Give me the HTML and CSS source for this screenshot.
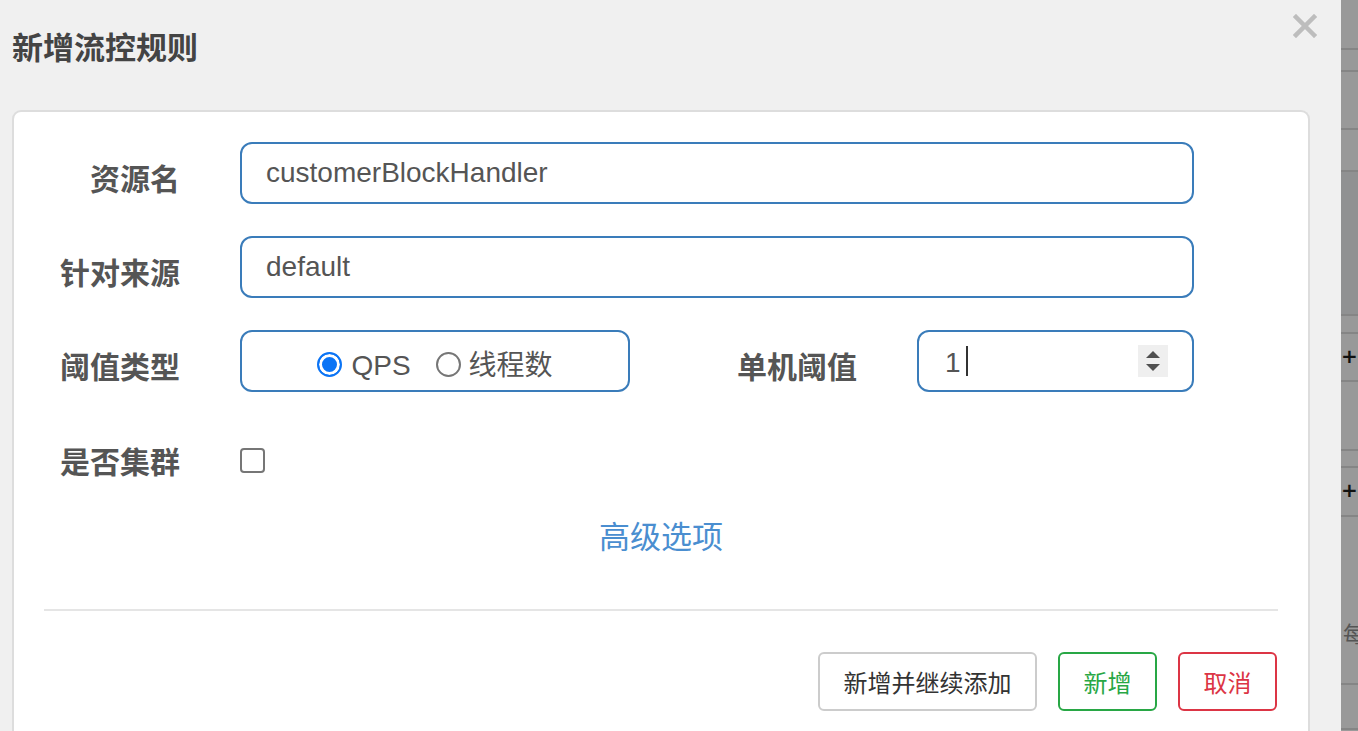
FILE: index.html
```html
<!DOCTYPE html>
<html lang="zh-CN">
<head>
<meta charset="utf-8">
<title>新增流控规则</title>
<link rel="stylesheet" href="styles.css">
</head>
<body>
<div class="page">
  <div class="modal">
    <div class="modal-header">
      <h1 class="modal-title">新增流控规则</h1>
      <svg class="close" width="24" height="24" viewBox="0 0 24 24"><path d="M3 3 L21 21 M21 3 L3 21" stroke="#bdbdbd" stroke-width="4.5" stroke-linecap="square"/></svg>
    </div>
    <div class="card">
      <div class="form">
        <div class="row">
          <label class="label lbl-main">资源名</label>
          <div class="input wide">customerBlockHandler</div>
        </div>
        <div class="row">
          <label class="label lbl-main">针对来源</label>
          <div class="input wide">default</div>
        </div>
        <div class="row">
          <label class="label lbl-main">阈值类型</label>
          <div class="input radio-box">
            <span class="radio checked"></span><span class="radio-text">QPS</span>
            <span class="radio"></span><span class="radio-text">线程数</span>
          </div>
          <label class="label lbl-second">单机阈值</label>
          <div class="input num">
            <span class="num-value">1</span><span class="caret"></span>
            <span class="spinner"><span class="tri up"></span><span class="tri down"></span></span>
          </div>
        </div>
        <div class="row row-check">
          <label class="label lbl-main">是否集群</label>
          <span class="checkbox"></span>
        </div>
        <div class="advanced"><a class="adv-link">高级选项</a></div>
        <div class="divider"></div>
        <div class="actions">
          <button class="btn btn-default">新增并继续添加</button>
          <button class="btn btn-success">新增</button>
          <button class="btn btn-danger">取消</button>
        </div>
      </div>
    </div>
  </div>
  <div class="backdrop">
    <div class="bd-row" style="height:50px"></div>
    <div class="bd-row" style="height:22px"></div>
    <div class="bd-row" style="height:58px"></div>
    <div class="bd-row" style="height:42px"></div>
    <div class="bd-row dark" style="height:144px"></div>
    <div class="bd-row" style="height:18px"></div>
    <div class="bd-row plus-row" style="height:48px"><span class="plus">+</span></div>
    <div class="bd-row" style="height:69px"></div>
    <div class="bd-row" style="height:17px"></div>
    <div class="bd-row plus-row" style="height:49px"><span class="plus">+</span></div>
    <div class="bd-row char-row" style="height:168px"><span class="mei">每</span></div>
    <div class="bd-row" style="height:45px"></div>
  </div>
</div>
</body>
</html>
```
FILE: styles.css
```css
* { box-sizing: border-box; }
html, body { margin: 0; padding: 0; }
body {
  font-family: "Liberation Sans", "Noto Sans CJK SC", sans-serif;
  background: #f0f0f0;
  overflow: hidden;
}
.page {
  display: flex;
  width: 1358px;
  height: 731px;
  overflow: hidden;
}
.modal {
  width: 1341px;
  flex: none;
  background: #f0f0f0;
  display: flex;
  flex-direction: column;
}
.modal-header {
  height: 110px;
  display: flex;
  justify-content: space-between;
  align-items: flex-start;
  padding: 0 24px 0 12px;
}
.modal-title {
  margin: 25px 0 0 0;
  font-size: 31px;
  line-height: 42px;
  font-weight: bold;
  color: #444;
  font-family: "Noto Sans CJK SC", sans-serif;
}
.close { margin-top: 14px; }
.card {
  margin-left: 12px;
  width: 1298px;
  flex: 1;
  background: #fff;
  border: 2px solid #dddddd;
  border-bottom: none;
  border-radius: 9px 9px 0 0;
}
.form {
  padding: 30px 30px 0 30px;
  display: flex;
  flex-direction: column;
}
.row {
  display: flex;
  align-items: center;
  height: 62px;
  margin-bottom: 32px;
}
.label {
  font-family: "Noto Sans CJK SC", sans-serif;
  font-weight: bold;
  font-size: 30px;
  line-height: 40px;
  color: #555;
  text-align: right;
  flex: none;
  padding-top: 7px;
}
.lbl-main { width: 136px; margin-right: 60px; }
.lbl-second { width: 227px; margin-right: 60px; }
.input {
  height: 62px;
  border: 2px solid #3a7cba;
  border-radius: 12px;
  font-size: 28px;
  color: #555;
  display: flex;
  align-items: center;
  flex: none;
}
.wide { width: 954px; padding-left: 24px; }
.radio-box {
  width: 390px;
  justify-content: center;
  padding-top: 10px;
}
.radio {
  width: 25px;
  height: 25px;
  border-radius: 50%;
  border: 2px solid #767676;
  margin-top: -3px;
  flex: none;
}
.radio.checked {
  border-color: #0b74f5;
  background: #0b74f5;
  box-shadow: inset 0 0 0 3px #fff;
}
.radio-text {
  font-family: "Liberation Sans", "Noto Sans CJK SC", sans-serif;
  margin-left: 9px;
  margin-right: 25px;
  line-height: 40px;
}
.radio-text:last-child { margin-right: 0; margin-left: 8px; }
.num {
  width: 277px;
  padding-left: 26px;
  padding-right: 24px;
}
.num-value { line-height: 30px; margin-top: 4px; }
.caret {
  width: 2px;
  height: 30px;
  background: #333;
  margin-left: 5px;
}
.spinner {
  margin-left: auto;
  width: 30px;
  height: 32px;
  background: #efefef;
  display: flex;
  flex-direction: column;
  align-items: center;
  justify-content: center;
  gap: 6px;
}
.tri {
  width: 0;
  height: 0;
  border-left: 7px solid transparent;
  border-right: 7px solid transparent;
}
.tri.up { border-bottom: 7px solid #505050; }
.tri.down { border-top: 7px solid #505050; }
.row-check { height: 72px; margin-bottom: 0; }
.row-check .label { padding-top: 0; }
.checkbox {
  width: 25px;
  height: 25px;
  border: 2px solid #767676;
  border-radius: 4px;
  flex: none;
  margin-top: 1px;
}
.advanced {
  text-align: center;
  margin-top: 19px;
  height: 40px;
}
.adv-link {
  font-family: "Noto Sans CJK SC", sans-serif;
  font-size: 31px;
  line-height: 40px;
  color: #4a8ed0;
}
.divider {
  margin-top: 54px;
  height: 2px;
  background: #e5e5e5;
}
.actions {
  margin-top: 41px;
  display: flex;
  justify-content: flex-end;
  gap: 21px;
  padding-right: 1px;
}
.btn {
  height: 59px;
  padding: 0 23.5px;
  border: 2px solid #ccc;
  border-radius: 6px;
  background: #fff;
  font-family: "Noto Sans CJK SC", sans-serif;
  font-size: 24px;
  line-height: 30px;
  color: #333;
  cursor: pointer;
}
.btn-success { border-color: #28a745; color: #28a745; }
.btn-danger { border-color: #dc3545; color: #dc3545; }
.backdrop {
  flex: 1;
  background: #9a9a9a;
  display: flex;
  flex-direction: column;
  overflow: hidden;
}
.bd-row {
  flex: none;
  border-bottom: 2px solid #858585;
  position: relative;
  background: #999999;
}
.bd-row.dark { background: #909192; }
.plus {
  position: absolute;
  left: 0;
  top: 9px;
  font-family: "DejaVu Sans", sans-serif;
  font-weight: bold;
  font-size: 20px;
  line-height: 26px;
  color: #111;
}
.mei {
  position: absolute;
  left: 2px;
  top: 102px;
  font-family: "Noto Sans CJK SC", sans-serif;
  font-size: 22px;
  line-height: 26px;
  color: #555;
}
```
